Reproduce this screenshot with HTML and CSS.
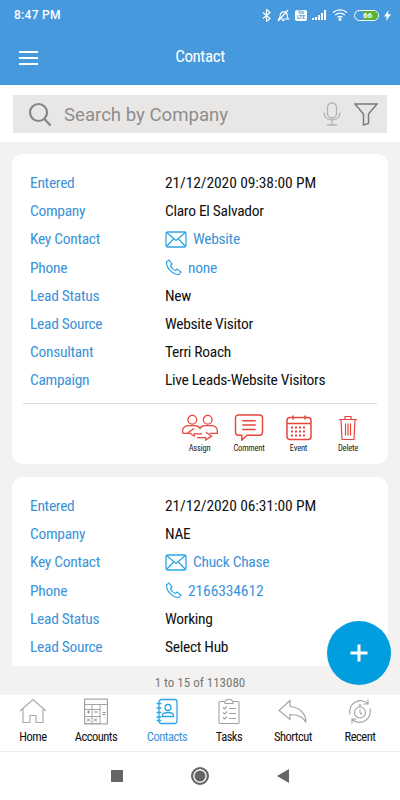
FILE: index.html

```html
<!DOCTYPE html>
<html lang="en">
<head>
  <meta charset="UTF-8" />
  <title>Contact</title>
  <link rel="stylesheet" href="styles.css">
</head>
<body>
  <div class="phone">
    <header class="top">
      <div class="status">
        <span class="time">8:47 PM</span>
        <div class="status-icons">
          <svg width="9" height="13" viewBox="0 0 9 13" fill="none" stroke="#fff" stroke-width="1.2"><path d="M1 3.500l7 6-3.500 3v-12l3.500 3-7 6"/></svg>
          <svg width="14" height="13" viewBox="0 0 14 13" fill="none" stroke="#fff" stroke-width="1.2"><path d="M3 10c1-1 1-3 1.500-5s4-3 5.500-1.500 1 3 1.500 5l1 1.500H3zM6 11.500h2.500M2 12L12 1"/></svg>
          <span class="volte">Vo<br>LTE</span>
          <svg width="15" height="11" viewBox="0 0 15 11" fill="#fff"><rect x="0" y="8" width="2" height="2"/><rect x="3" y="7" width="2" height="3"/><rect x="6" y="5" width="2" height="5"/><rect x="9" y="3" width="2" height="7"/><rect x="12" y="0" width="2" height="10"/></svg>
          <svg width="16" height="12" viewBox="0 0 16 12" fill="none" stroke="#fff" stroke-width="1.300"><path d="M1 3.500c4-3.500 10-3.500 14 0M3.200 6c3-2.400 6.600-2.400 9.600 0M5.500 8.300c1.500-1 3.500-1 5 0"/><circle cx="8" cy="10.500" r=".8" fill="#fff"/></svg>
          <span class="battery"><span class="battery-level">66</span></span>
          <svg width="7" height="11" viewBox="0 0 7 11" fill="#fff"><path d="M4.500 0L0 6.500h2.800L2 11l5-6.800H4z"/></svg>
        </div>
      </div>
      <div class="title-bar">
        <div class="burger"><i></i><i></i><i></i></div>
        <h1>Contact</h1>
      </div>
    </header>

    <div class="search-band">
      <div class="search">
        <svg class="search-glass" width="24" height="25" viewBox="0 0 24 25" fill="none" stroke="#858585" stroke-width="2.200"><circle cx="10.500" cy="10.500" r="8.500"/><path d="M16.500 17l6 6.500"/></svg>
        <span class="search-text">Search by Company</span>
        <svg class="search-mic" width="18" height="24" viewBox="0 0 18 24" fill="none" stroke="#b4b4b2" stroke-width="1.300"><rect x="4.500" y="1" width="9" height="15" rx="4.500"/><path d="M1 10.500c0 10 16 10 16 0M9 19v4M4 23h10"/></svg>
        <svg width="24" height="23" viewBox="0 0 24 23" fill="none" stroke="#7c7c7c" stroke-width="1.500"><path d="M1 1h22l-8.500 10v9.500l-5 1.500V11z"/></svg>
      </div>
    </div>

    <main class="list">
      <section class="card card-first">
        <div class="row"><span class="label">Entered</span><span class="value num">21/12/2020 09:38:00 PM</span></div>
        <div class="row"><span class="label">Company</span><span class="value">Claro El Salvador</span></div>
        <div class="row"><span class="label">Key Contact</span><span class="value link"><svg class="mail" width="22" height="17" viewBox="0 0 22 17" fill="none" stroke="#2ea5e6" stroke-width="1.300"><rect x="1" y="1" width="20" height="15" rx="1.500"/><path d="M1.500 1.500L11 9.500l9.500-8M1.500 15.500l7-7.500M20.500 15.500l-7-7.500"/></svg>Website</span></div>
        <div class="row"><span class="label">Phone</span><span class="value link"><svg class="phone-icon" width="17" height="17" viewBox="0 0 17 17" fill="none" stroke="#2ea5e6" stroke-width="1.200"><path d="M1.500 3L4 1l3 4-1.500 1.500c.5 2 3 4.500 5 5L12 10l4 3-2 2.500C8 16 1 9 1.500 3z"/></svg>none</span></div>
        <div class="row"><span class="label">Lead Status</span><span class="value">New</span></div>
        <div class="row"><span class="label">Lead Source</span><span class="value">Website Visitor</span></div>
        <div class="row"><span class="label">Consultant</span><span class="value">Terri Roach</span></div>
        <div class="row"><span class="label">Campaign</span><span class="value">Live Leads-Website Visitors</span></div>
        <div class="actions">
          <div class="action">
            <svg width="38" height="28" viewBox="0 0 38 28" fill="none" stroke="#e8453c" stroke-width="1.300"><circle cx="11" cy="6" r="4.500"/><circle cx="27" cy="6" r="4.500"/><path d="M1 20v-3c0-3 3-5 6-5h7c3 0 4 1 5 3 1-2 2-3 5-3h7c3 0 6 2 6 5v3h-8M10 20H1M13 15l-6 4 6 4v-2.500h8M25 19l6 4-6 4v-2.500h-9"/></svg>
            <span>Assign</span>
          </div>
          <div class="action">
            <svg width="30" height="28" viewBox="0 0 30 28" fill="none" stroke="#e8453c" stroke-width="1.500"><path d="M4 1h22a3 3 0 0 1 3 3v15a3 3 0 0 1-3 3H13l-5.500 5v-5H4a3 3 0 0 1-3-3V4a3 3 0 0 1 3-3zM8 7h14M8 11.500h14M8 16h14"/></svg>
            <span>Comment</span>
          </div>
          <div class="action">
            <svg width="26" height="26" viewBox="0 0 26 26" fill="none" stroke="#e8453c" stroke-width="1.500"><rect x="1" y="3" width="24" height="22" rx="3"/><path d="M1 9h24M7 1v4M19 1v4"/><path d="M5 13h16M5 17h16M5 21h16" stroke-width="2" stroke-dasharray="2 2"/></svg>
            <span>Event</span>
          </div>
          <div class="action">
            <svg width="20" height="26" viewBox="0 0 20 26" fill="none" stroke="#e8453c" stroke-width="1.200"><path d="M1 5h18M7 5V2h6v3M3 5l1 20h12l1-20M7.500 9v12M10 9v12M12.500 9v12"/></svg>
            <span>Delete</span>
          </div>
        </div>
      </section>

      <section class="card">
        <div class="row"><span class="label">Entered</span><span class="value num">21/12/2020 06:31:00 PM</span></div>
        <div class="row"><span class="label">Company</span><span class="value">NAE</span></div>
        <div class="row"><span class="label">Key Contact</span><span class="value link"><svg class="mail" width="22" height="17" viewBox="0 0 22 17" fill="none" stroke="#2ea5e6" stroke-width="1.300"><rect x="1" y="1" width="20" height="15" rx="1.500"/><path d="M1.500 1.500L11 9.500l9.500-8M1.500 15.500l7-7.500M20.500 15.500l-7-7.500"/></svg>Chuck Chase</span></div>
        <div class="row"><span class="label">Phone</span><span class="value link num"><svg class="phone-icon" width="17" height="17" viewBox="0 0 17 17" fill="none" stroke="#2ea5e6" stroke-width="1.200"><path d="M1.500 3L4 1l3 4-1.500 1.500c.5 2 3 4.500 5 5L12 10l4 3-2 2.500C8 16 1 9 1.500 3z"/></svg>2166334612</span></div>
        <div class="row"><span class="label">Lead Status</span><span class="value">Working</span></div>
        <div class="row"><span class="label">Lead Source</span><span class="value">Select Hub</span></div>
      </section>
    </main>

    <div class="pager">1 to 15 of 113080</div>
    <button class="fab"><svg width="20" height="20" viewBox="0 0 20 20"><path d="M8.500 1.500h3v7h7v3h-7v7h-3v-7h-7v-3h7z" fill="#fff"/></svg></button>

    <nav class="tabs">
      <div class="tab">
        <svg width="28" height="26" viewBox="0 0 28 26" fill="none" stroke="#a9adb0" stroke-width="1.200"><path d="M1 12.500L14 1l13 11.500M4 10v14h7v-7h6v7h7V10"/></svg>
        <span>Home</span>
      </div>
      <div class="tab">
        <svg width="24" height="26" viewBox="0 0 24 26"><rect x=".6" y=".6" width="22.800" height="24.800" fill="none" stroke="#a2a5a7" stroke-width="1.200"/><path d="M1 6h22M1 11h16M1 18h16M1 25h16M8 6v19M16 6v19" stroke="#a2a5a7" fill="none"/><path d="M3 13.500h3M4.500 12v3M10 13.500h4M18.500 14h3M18.500 16h3M3 20l3 3M6 20l-3 3M10 20l3 3M13 20l-3 3" stroke="#8d8f91" fill="none"/></svg>
        <span>Accounts</span>
      </div>
      <div class="tab tab-active">
        <svg width="22" height="26" viewBox="0 0 22 26" fill="none" stroke="#2ea5e6" stroke-width="1.300"><rect x="3" y="1" width="18" height="24" rx="2.500"/><circle cx="12" cy="9" r="3"/><path d="M6.500 18v-1c0-2 3-3 5.500-3s5.500 1 5.500 3v1zM.5 5h5M.5 9.500h5M.5 14h5M.5 18.500h5M.5 22h5"/></svg>
        <span>Contacts</span>
      </div>
      <div class="tab">
        <svg width="22" height="26" viewBox="0 0 22 26" fill="none" stroke="#9fa3a5" stroke-width="1.100"><path d="M7 3H2a1 1 0 0 0-1 1v20a1 1 0 0 0 1 1h18a1 1 0 0 0 1-1V4a1 1 0 0 0-1-1h-5M7 5V3l2-2h4l2 2v2zM5 9l1.500 1.500L9 8M5 14l1.500 1.500L9 13M5 19l1.500 1.500L9 18M11 10h7M11 15h7M11 20h7"/></svg>
        <span>Tasks</span>
      </div>
      <div class="tab">
        <svg width="30" height="24" viewBox="0 0 30 24" fill="none" stroke="#a2a5a7" stroke-width="1.200"><path d="M12 1L1 11l11 9v-5c7 0 13 2 16 8 0-9-6-15-16-16z"/></svg>
        <span>Shortcut</span>
      </div>
      <div class="tab">
        <svg width="26" height="26" viewBox="0 0 26 26" fill="none" stroke="#9fa3a5" stroke-width="1.100"><path d="M3 16A11 11 0 0 1 21 5M23 10a11 11 0 0 1-18 11M21 1v4.500h-4.500M5 25v-4.500h4.500"/><circle cx="13" cy="14" r="5.500"/><path d="M13 6.500v2M13 11v3l2 2M11.500 6.500h3"/></svg>
        <span>Recent</span>
      </div>
    </nav>

    <div class="android-nav">
      <span class="nav-square"></span>
      <span class="nav-circle"></span>
      <span class="nav-back"></span>
    </div>
  </div>
</body>
</html>
```

FILE: styles.css

```css
* { box-sizing: border-box; }
body { margin: 0; font-family: "Liberation Sans Narrow", "Roboto Condensed", "Liberation Sans", sans-serif; }
.phone { position: relative; width: 400px; height: 800px; overflow: hidden; display: flex; flex-direction: column; background: #f3f2f1; }

.top { height: 85px; background: #4699dc; color: #fff; flex: none; }
.status { height: 29px; display: flex; justify-content: space-between; align-items: center; padding: 1px 9px 0 14px; }
.time { font-family: "Roboto", sans-serif; font-weight: 500; font-size: 12px; letter-spacing: 0.3px; }
.status-icons { display: flex; align-items: center; gap: 5px; }
.volte { width: 12px; height: 11px; background: #fff; border-radius: 2px; color: #4699dc; font: 700 5px/5px "Roboto", sans-serif; text-align: center; }
.battery { width: 25px; height: 11px; border: 1px solid #fff; border-radius: 6px; display: flex; justify-content: flex-end; margin-left: 1px; }
.battery-level { width: 15px; background: #5cb531; border-radius: 0 5px 5px 0; color: #fff; font: 700 8px/9px "Roboto", sans-serif; text-align: left; }
.title-bar { height: 56px; display: flex; align-items: center; justify-content: center; position: relative; }
.title-bar h1 { margin: 0 0 2px; font-size: 17px; font-weight: 400; letter-spacing: -0.4px; }
.burger { position: absolute; left: 19px; top: 22px; width: 19px; display: flex; flex-direction: column; gap: 4px; }
.burger i { display: block; height: 2px; background: #fff; }

.search-band { height: 57px; flex: none; background: #fff; padding: 10px 13px 0; }
.search { height: 38px; background: #e9e7e6; display: flex; align-items: center; padding: 0 9px 0 15px; }
.search-glass { flex: none; }
.search-text { flex: 1; margin-left: 12px; font-family: "Roboto", sans-serif; font-size: 18.6px; color: #8e8e8e; padding-top: 1px; }
.search-mic { margin-right: 13px; }

.list { flex: 1; min-height: 0; overflow: hidden; padding: 12px 12px 0; }
.card { background: #fff; padding: 15px 11px 0 18px; height: 189px; border-radius: 10px 10px 0 0; overflow: hidden; }
.card-first { height: 310px; border-radius: 10px; margin-bottom: 13px; }
.row { height: 28.2px; display: flex; align-items: center; font-size: 15.5px; letter-spacing: -0.3px; }
.label { width: 135px; color: #3b93d8; flex: none; }
.value { color: #111; display: flex; align-items: center; }
.num { letter-spacing: -0.1px; }
.link { color: #3b93d8; }
.mail { margin-right: 6px; }
.phone-icon { margin-right: 6px; }

.actions { margin: 8px 0 0 -7px; border-top: 1px solid #ddd; height: 60px; display: flex; justify-content: flex-end; padding: 10px 14px 0 0; gap: 19.5px; }
.action { display: flex; flex-direction: column; align-items: center; width: 30px; height: 48px; }
.action svg { height: 27px; flex: none; }
.action span { font-size: 8.5px; letter-spacing: -0.2px; color: #222; margin-top: 2px; white-space: nowrap; }

.pager { height: 29px; flex: none; text-align: center; font-size: 13px; color: #777; padding-top: 9px; }
.fab { position: absolute; left: 327px; top: 621px; width: 64px; height: 64px; border-radius: 50%; border: none; background: #009ddf; display: flex; align-items: center; justify-content: center; padding: 0; }

.tabs { height: 57px; flex: none; background: #fff; border-bottom: 1px solid #eee; display: grid; grid-template-columns: 66px 60px 82px 42px 86px 48px; padding-top: 3px; }
.tab { display: flex; flex-direction: column; align-items: center; font-size: 12.5px; letter-spacing: -0.5px; color: #111; white-space: nowrap; }
.tab svg { height: 27px; flex: none; }
.tab span { margin-top: 4px; }
.tab-active { color: #3b93d8; }

.android-nav { height: 48px; flex: none; background: #fff; display: flex; align-items: center; justify-content: center; gap: 68px; }
.nav-square { width: 12px; height: 12px; background: #666; }
.nav-circle { width: 18px; height: 18px; border-radius: 50%; background: #666; border: 2px solid #666; box-shadow: inset 0 0 0 1.500px #fff; }
.nav-back { width: 0; height: 0; border-style: solid; border-width: 7px 12px 7px 0; border-color: transparent #666 transparent transparent; }
```
